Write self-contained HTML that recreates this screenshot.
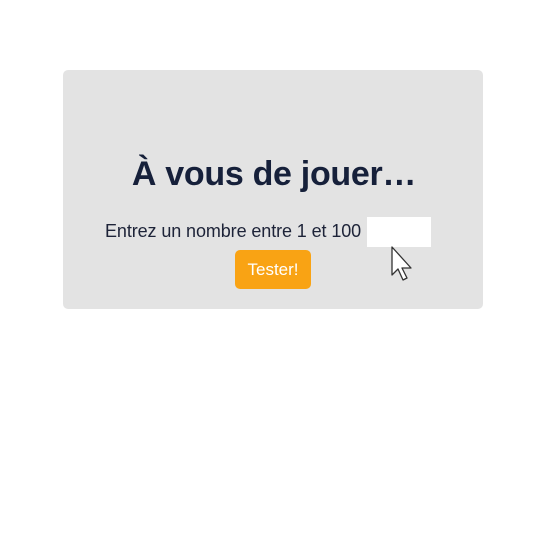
<!DOCTYPE html>
<html><head><style>
body{margin:0;width:546px;height:557px;background:#fff;font-family:"Liberation Sans",sans-serif;position:relative;overflow:hidden}
.card{position:absolute;left:63px;top:70px;width:420px;height:239px;background:#e3e3e3;border-radius:5px}
h1{position:absolute;left:0;right:0;top:152px;margin:0;text-align:center;font-size:34px;font-weight:bold;color:#16203a;letter-spacing:-0.3px;line-height:44px;padding-left:2px}
.lbl{position:absolute;left:105px;top:220px;font-size:18px;color:#1d2338;line-height:22px;letter-spacing:-0.1px}
.inp{position:absolute;left:367px;top:217px;width:64px;height:30px;background:#fff}
.btn{position:absolute;left:235px;top:250px;width:76px;height:39px;background:#f9a314;border-radius:5px;color:#fff;font-size:17px;line-height:39px;text-align:center}
</style></head><body>
<div class="card"></div>
<h1>À vous de jouer…</h1>
<div class="lbl">Entrez un nombre entre 1 et 100</div>
<div class="inp"></div>
<div class="btn">Tester!</div>
<svg style="position:absolute;left:390px;top:245px" width="28" height="40" viewBox="0 0 28 40">
<path d="M2 2 L2 30 L8 24 L13 35 L17 33 L12 23 L21 23 Z" fill="#fff" stroke="#333" stroke-width="1.3" stroke-linejoin="round"/>
</svg>
</body></html>
